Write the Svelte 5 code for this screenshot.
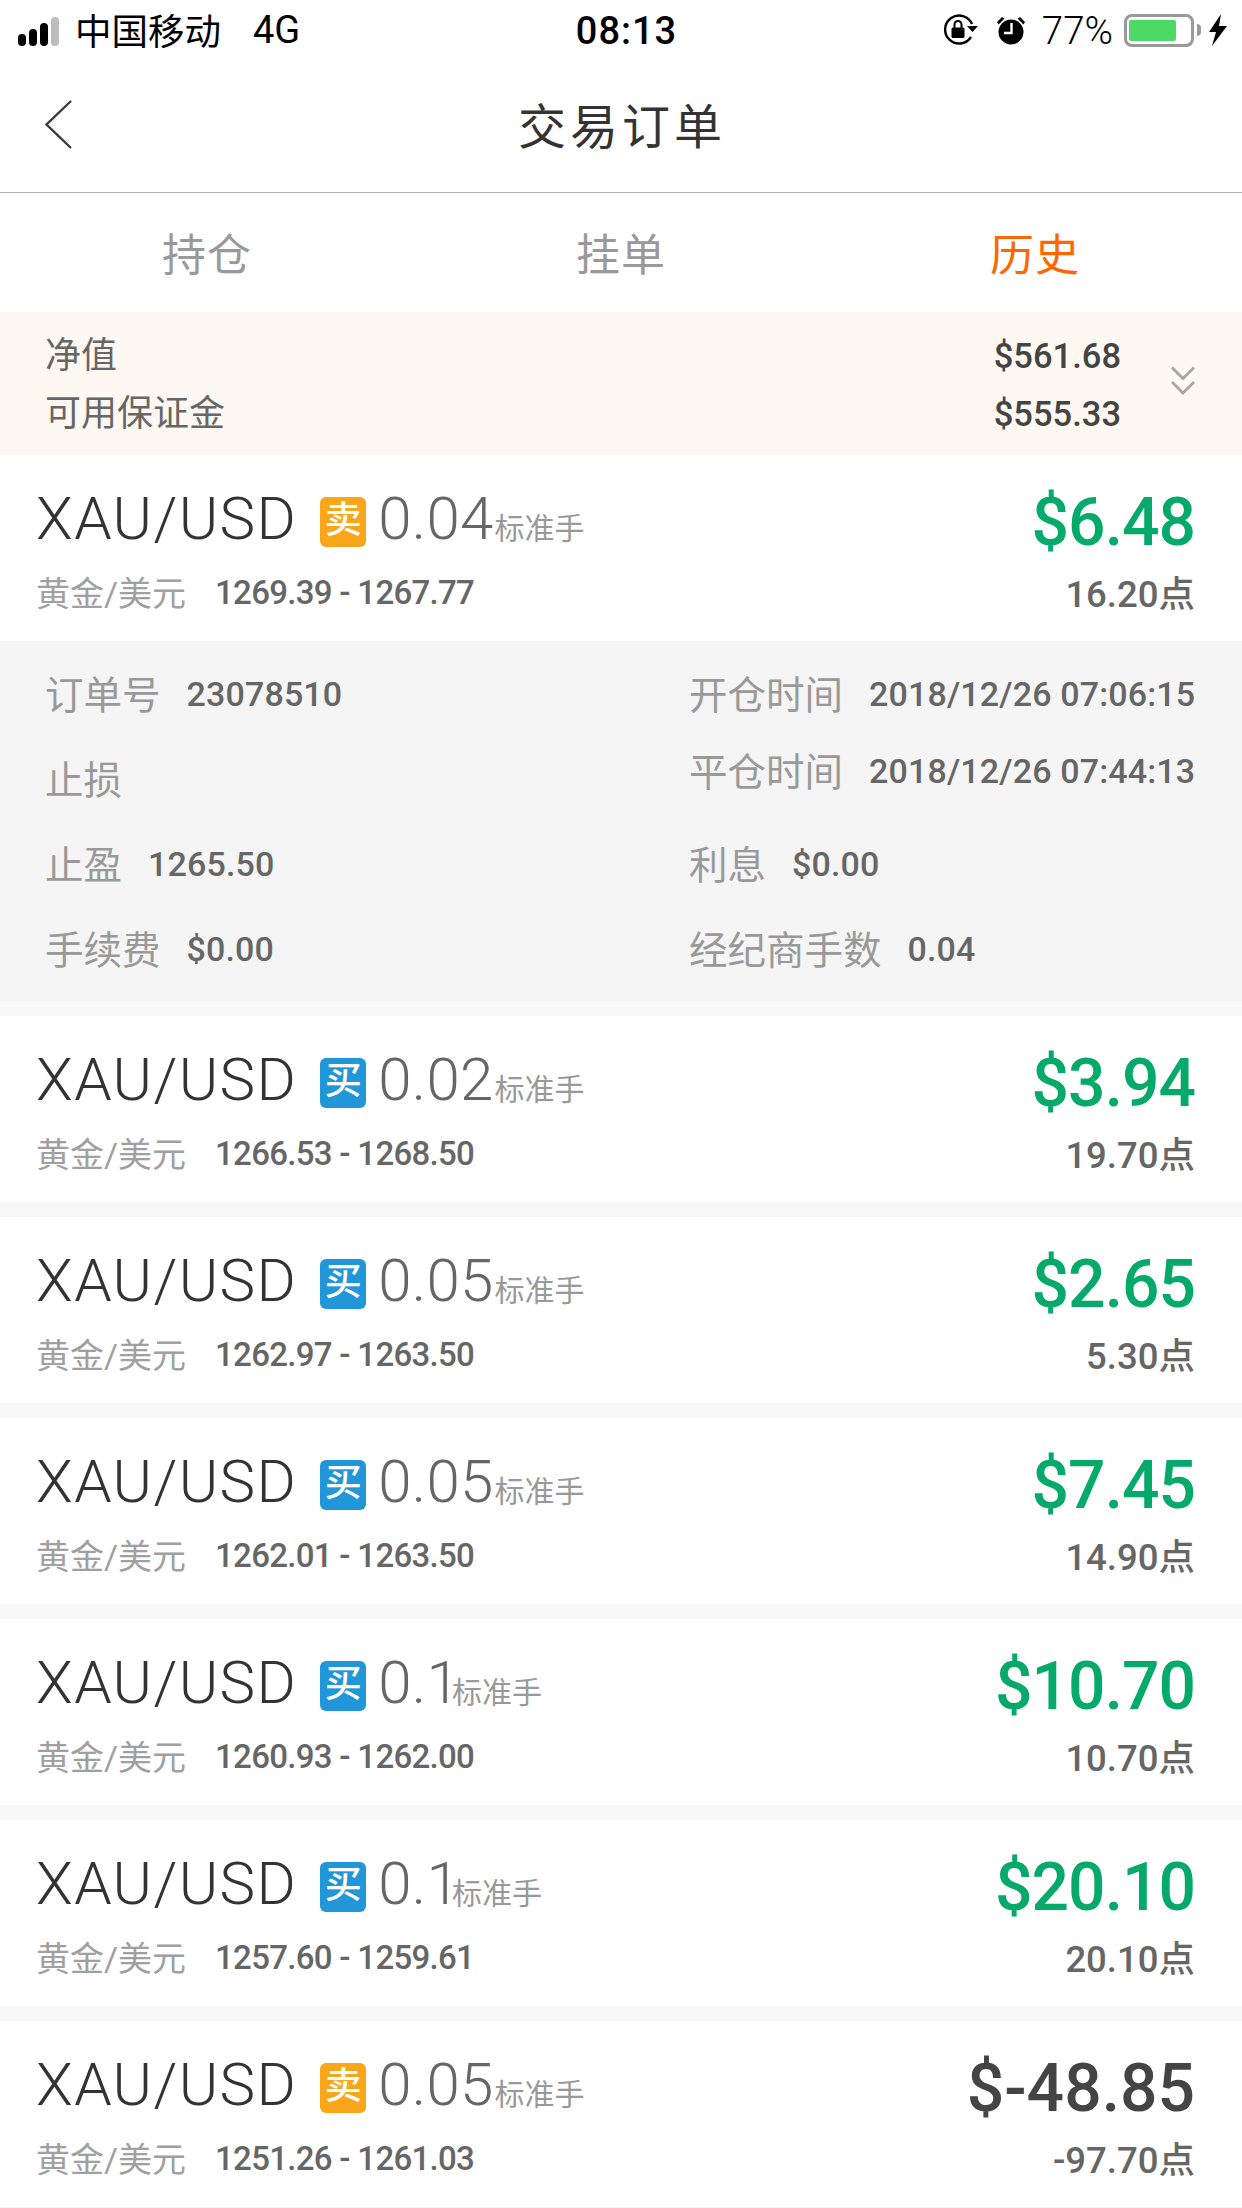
<script lang="ts">
  const orders = [
    { side: 'sell', lots: '0.04', range: '1269.39 - 1267.77', profit: '$6.48', points: '16.20点', open: true },
    { side: 'buy', lots: '0.02', range: '1266.53 - 1268.50', profit: '$3.94', points: '19.70点' },
    { side: 'buy', lots: '0.05', range: '1262.97 - 1263.50', profit: '$2.65', points: '5.30点' },
    { side: 'buy', lots: '0.05', range: '1262.01 - 1263.50', profit: '$7.45', points: '14.90点' },
    { side: 'buy', lots: '0.1', range: '1260.93 - 1262.00', profit: '$10.70', points: '10.70点' },
    { side: 'buy', lots: '0.1', range: '1257.60 - 1259.61', profit: '$20.10', points: '20.10点' },
    { side: 'sell', lots: '0.05', range: '1251.26 - 1261.03', profit: '$-48.85', points: '-97.70点', loss: true }
  ];
</script>

<div class="page">
  <div class="status">
    <div class="status-left">
      <div class="signal"><i></i><i></i><i></i><i class="off"></i></div>
      <span class="carrier">中国移动</span>
      <span class="net">4G</span>
    </div>
    <div class="clock">08:13</div>
    <div class="status-right">
      <svg class="lock" width="36" height="32" viewBox="0 0 36 32">
        <path d="M28 23A14 14 0 1 1 29 10" fill="none" stroke="#000" stroke-width="2.400"/>
        <path d="M24 12h11l-5.500 6z" fill="#000"/>
        <rect x="8.500" y="13.500" width="13" height="10.500" rx="1.500" fill="#000"/>
        <path d="M11.500 14V10.500a3.500 3.500 0 0 1 7 0V14" fill="none" stroke="#000" stroke-width="2"/>
      </svg>
      <svg class="alarm" width="28" height="30" viewBox="0 0 28 30">
        <circle cx="14" cy="17" r="12.500" fill="#000"/>
        <path d="M0 7l5-5 2.500 1.500-6 6zM28 7l-5-5-2.500 1.500 6 6z" fill="#000"/>
        <path d="M14.500 8v10H7" fill="none" stroke="#fff" stroke-width="2.400"/>
      </svg>
      <span class="pct">77%</span>
      <div class="battery"><div class="battery-fill"></div></div>
      <div class="battery-tip"></div>
      <svg class="bolt" width="20" height="32" viewBox="0 0 20 32">
        <path d="M13 0L1 18h7L4 32 19 12h-8z" fill="#000"/>
      </svg>
    </div>
  </div>

  <header class="nav">
    <svg class="back" width="27" height="50" viewBox="0 0 27 50">
      <path d="M26 1L1.500 24.500 26 48" fill="none" stroke="#3a3a3a" stroke-width="2.400"/>
    </svg>
    <h1>交易订单</h1>
  </header>

  <nav class="tabs">
    <span>持仓</span>
    <span>挂单</span>
    <span class="active">历史</span>
  </nav>

  <section class="summary">
    <div class="summary-labels">
      <span>净值</span>
      <span>可用保证金</span>
    </div>
    <div class="summary-values">
      <span>$561.68</span>
      <span>$555.33</span>
    </div>
    <svg class="chevrons" width="24" height="29" viewBox="0 0 24 29">
      <path d="M1 1.500l11 11 11-11" fill="none" stroke="#aaa59e" stroke-width="2.800"/>
      <path d="M1 16l11 11 11-11" fill="none" stroke="#aaa59e" stroke-width="2.800"/>
    </svg>
  </section>

  {#each orders as o}
    <article class="order">
      <div class="order-main">
        <div class="line-top">
          <span class="symbol">XAU/USD</span>
          <span class="tag {o.side}">{o.side === 'sell' ? '卖' : '买'}</span>
          <span class="lots">{o.lots}</span><span class="unit" class:short={o.lots.length < 4}>标准手</span>
        </div>
        <div class="line-sub">
          <span class="pair">黄金/美元</span>
          <span class="range">{o.range}</span>
        </div>
      </div>
      <div class="order-result">
        <div class="profit" class:loss={o.loss}>{o.profit}</div>
        <div class="points">{o.points}</div>
      </div>
    </article>
    {#if o.open}
      <section class="detail">
        <div class="detail-row"><span class="k">订单号</span><span class="v">23078510</span></div>
        <div class="detail-row"><span class="k">开仓时间</span><span class="v">2018/12/26 07:06:15</span></div>
        <div class="detail-row"><span class="k">止损</span></div>
        <div class="detail-row shift"><span class="k">平仓时间</span><span class="v">2018/12/26 07:44:13</span></div>
        <div class="detail-row"><span class="k">止盈</span><span class="v">1265.50</span></div>
        <div class="detail-row"><span class="k">利息</span><span class="v">$0.00</span></div>
        <div class="detail-row"><span class="k">手续费</span><span class="v">$0.00</span></div>
        <div class="detail-row"><span class="k">经纪商手数</span><span class="v">0.04</span></div>
      </section>
    {/if}
  {/each}
</div>

<style>
  :global(body) { margin: 0; background: #f8f8f8; }
  .page {
    width: 1242px;
    height: 2208px;
    overflow: hidden;
    background: #f8f8f8;
    font-family: Roboto, "Noto Sans CJK SC", sans-serif;
  }

  .status { height: 62px; background: #fff; display: flex; align-items: center; justify-content: space-between; padding: 0 14px 0 18px; position: relative; color: #000; }
  .status-left { display: flex; align-items: center; margin-top: -3px; }
  .signal { display: flex; align-items: flex-end; gap: 3px; height: 30px; margin-right: 16px; margin-top: 3px; }
  .signal i { width: 8px; border-radius: 4px; background: #000; }
  .signal i:nth-child(1) { height: 12px; }
  .signal i:nth-child(2) { height: 17px; }
  .signal i:nth-child(3) { height: 23px; }
  .signal i:nth-child(4) { height: 29px; }
  .signal i.off { background: #bdbdbd; }
  .carrier { font-size: 36.500px; }
  .net { font-size: 38px; font-weight: 400; margin-left: 32px; }
  .clock { position: absolute; left: 0; right: 0; top: 9px; padding-left: 11px; text-align: center; font-size: 38px; font-weight: 500; letter-spacing: 1px; }
  .status-right { display: flex; align-items: center; margin-top: -2px; }
  .lock { margin-right: 18px; }
  .alarm { margin-right: 17px; }
  .pct { font-size: 38.500px; margin-right: 11px; font-weight: 300; }
  .battery { width: 70px; height: 33px; box-sizing: border-box; border: 3px solid #999; border-radius: 8px; padding: 3px 2px; }
  .battery-fill { width: 47px; height: 100%; background: #4cd964; border-radius: 2px; }
  .battery-tip { width: 4px; height: 12px; background: #999; margin-left: 3px; margin-right: 7px; border-radius: 0 4px 4px 0; }

  .nav { height: 130px; background: #fff; border-bottom: 1px solid #b3b3b3; display: flex; align-items: center; justify-content: center; position: relative; }
  .nav h1 { margin: -8px 0 0 2px; font-size: 48px; font-weight: 400; color: #333; letter-spacing: 4px; }
  .back { position: absolute; left: 45px; top: 38px; }

  .tabs { height: 119px; background: #fff; display: grid; grid-template-columns: repeat(3, 1fr); align-items: center; text-align: center; font-size: 44px; color: #999; letter-spacing: 1px; }
  .tabs span { margin-top: -2px; }
  .tabs .active { color: #ff6600; }

  .summary { height: 143px; box-sizing: border-box; background: #fef8f2; display: flex; align-items: center; padding: 2px 47px 0 45px; color: #666; font-size: 36px; }
  .summary-labels { display: flex; flex-direction: column; gap: 14px; flex: 1; }
  .summary-labels span, .summary-values span { line-height: 44px; }
  .summary-values { display: flex; flex-direction: column; gap: 14px; font-weight: 500; font-size: 34.500px; color: #444; margin-right: 50px; }
  .chevrons { margin-top: -8px; }

  .order { height: 186px; box-sizing: border-box; background: #fff; margin-bottom: 15px; padding: 28px 47px 0 36px; display: flex; justify-content: space-between; }
  .order:has(+ .detail) { margin-bottom: 0; }
  .line-top { display: flex; align-items: baseline; height: 80px; }
  .symbol { font-size: 60px; font-weight: 300; color: #333; letter-spacing: 1.400px; }
  .tag { align-self: center; width: 46px; height: 50px; border-radius: 6px; color: #fff; font-size: 37px; font-weight: 500; line-height: 48px; text-align: center; margin: -3px 12px 0 23px; }
  .tag.sell { background: #faa61a; }
  .tag.buy { background: #2196d8; }
  .lots { font-size: 60px; font-weight: 300; color: #666; letter-spacing: 0.300px; }
  .unit { font-size: 30px; color: #999; margin-left: 1px; }
  .unit.short { margin-left: -8px; }
  .line-sub { display: flex; align-items: center; margin-top: 4px; }
  .pair { font-size: 34px; color: #a0a0a0; }
  .range { font-size: 33px; font-weight: 500; color: #666; margin: 2px 0 0 29px; letter-spacing: -0.700px; }
  .order-result { text-align: right; }
  .profit { font-size: 66px; font-weight: 500; color: #05aa6b; line-height: 80px; letter-spacing: -1px; }
  .profit.loss { color: #444; letter-spacing: 0; }
  .points { font-size: 36.500px; font-weight: 500; color: #666; margin-top: 2px; }

  .detail { height: 360px; box-sizing: border-box; background: #f5f5f5; margin-bottom: 15px; padding: 8px 47px 0 45px; display: grid; grid-template-columns: 644px 1fr; grid-auto-rows: 85px; align-items: center; }
  .detail-row { display: flex; align-items: center; white-space: nowrap; }
  .detail-row.shift { position: relative; top: -8px; }
  .k { font-size: 38.500px; color: #999; margin-right: 26px; }
  .v { font-size: 34px; font-weight: 500; color: #666; margin-top: 4px; letter-spacing: 0.150px; }
</style>
